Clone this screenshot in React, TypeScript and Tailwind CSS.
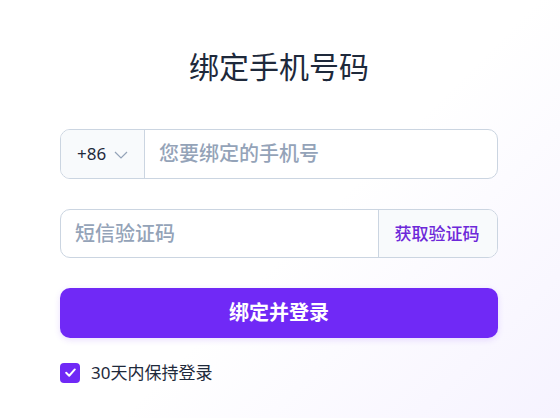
import React from "react";

export default function App() {
  return (
    <div
      className="w-[560px] h-[418px] overflow-hidden bg-[linear-gradient(135deg,#ffffff_0%,#ffffff_55%,#f6f3ff_100%)]"
      style={{ fontFamily: '"Noto Sans", "Noto Sans CJK SC", sans-serif' }}
    >
      <div className="w-[438px] ml-[60px] pt-[46px] flex flex-col">
        <h1 className="text-center text-[30px] leading-[42px] text-[#1e293b] font-normal">
          绑定手机号码
        </h1>

        <div className="mt-[41px] h-[50px] flex rounded-[10px] border border-[#cbd5e1] overflow-hidden bg-white">
          <div className="w-[84px] shrink-0 flex items-center gap-[8px] pl-[16px] bg-[#f8fafc] border-r border-[#cbd5e1]">
            <span className="text-[17px] text-[#1e293b]">+86</span>
            <svg width="14" height="14" viewBox="0 0 14 14" fill="none" className="mt-[1px]">
              <path d="M1 4 L7 10 L13 4" stroke="#94a3b8" strokeWidth="1.2" />
            </svg>
          </div>
          <div className="flex-1 flex items-center pl-[14px] text-[20px] font-medium text-[#94a3b8]">
            您要绑定的手机号
          </div>
        </div>

        <div className="mt-[30px] h-[49px] flex rounded-[10px] border border-[#cbd5e1] overflow-hidden bg-white">
          <div className="flex-1 flex items-center pl-[14px] text-[20px] font-medium text-[#94a3b8]">
            短信验证码
          </div>
          <div className="w-[119px] shrink-0 flex items-center justify-center pr-[2px] bg-[#f8fafc] border-l border-[#cbd5e1] text-[17px] font-medium text-[#6d28d9]">
            获取验证码
          </div>
        </div>

        <button className="mt-[30px] h-[50px] w-full rounded-[10px] bg-[#7029f6] text-white text-[20px] font-bold shadow-[0_2px_6px_rgba(112,41,246,0.15)]">
          绑定并登录
        </button>

        <div className="mt-[22px] flex items-center gap-[11px]">
          <div className="w-[20px] h-[20px] rounded-[4px] bg-[#7029f6] flex items-center justify-center">
            <svg width="13" height="13" viewBox="0 0 12 12" fill="none">
              <path d="M2 6.2 L4.8 9 L10 3.2" stroke="white" strokeWidth="1.8" strokeLinecap="round" strokeLinejoin="round" />
            </svg>
          </div>
          <span className="text-[17px] text-[#1e293b]">30天内保持登录</span>
        </div>
      </div>
    </div>
  );
}
